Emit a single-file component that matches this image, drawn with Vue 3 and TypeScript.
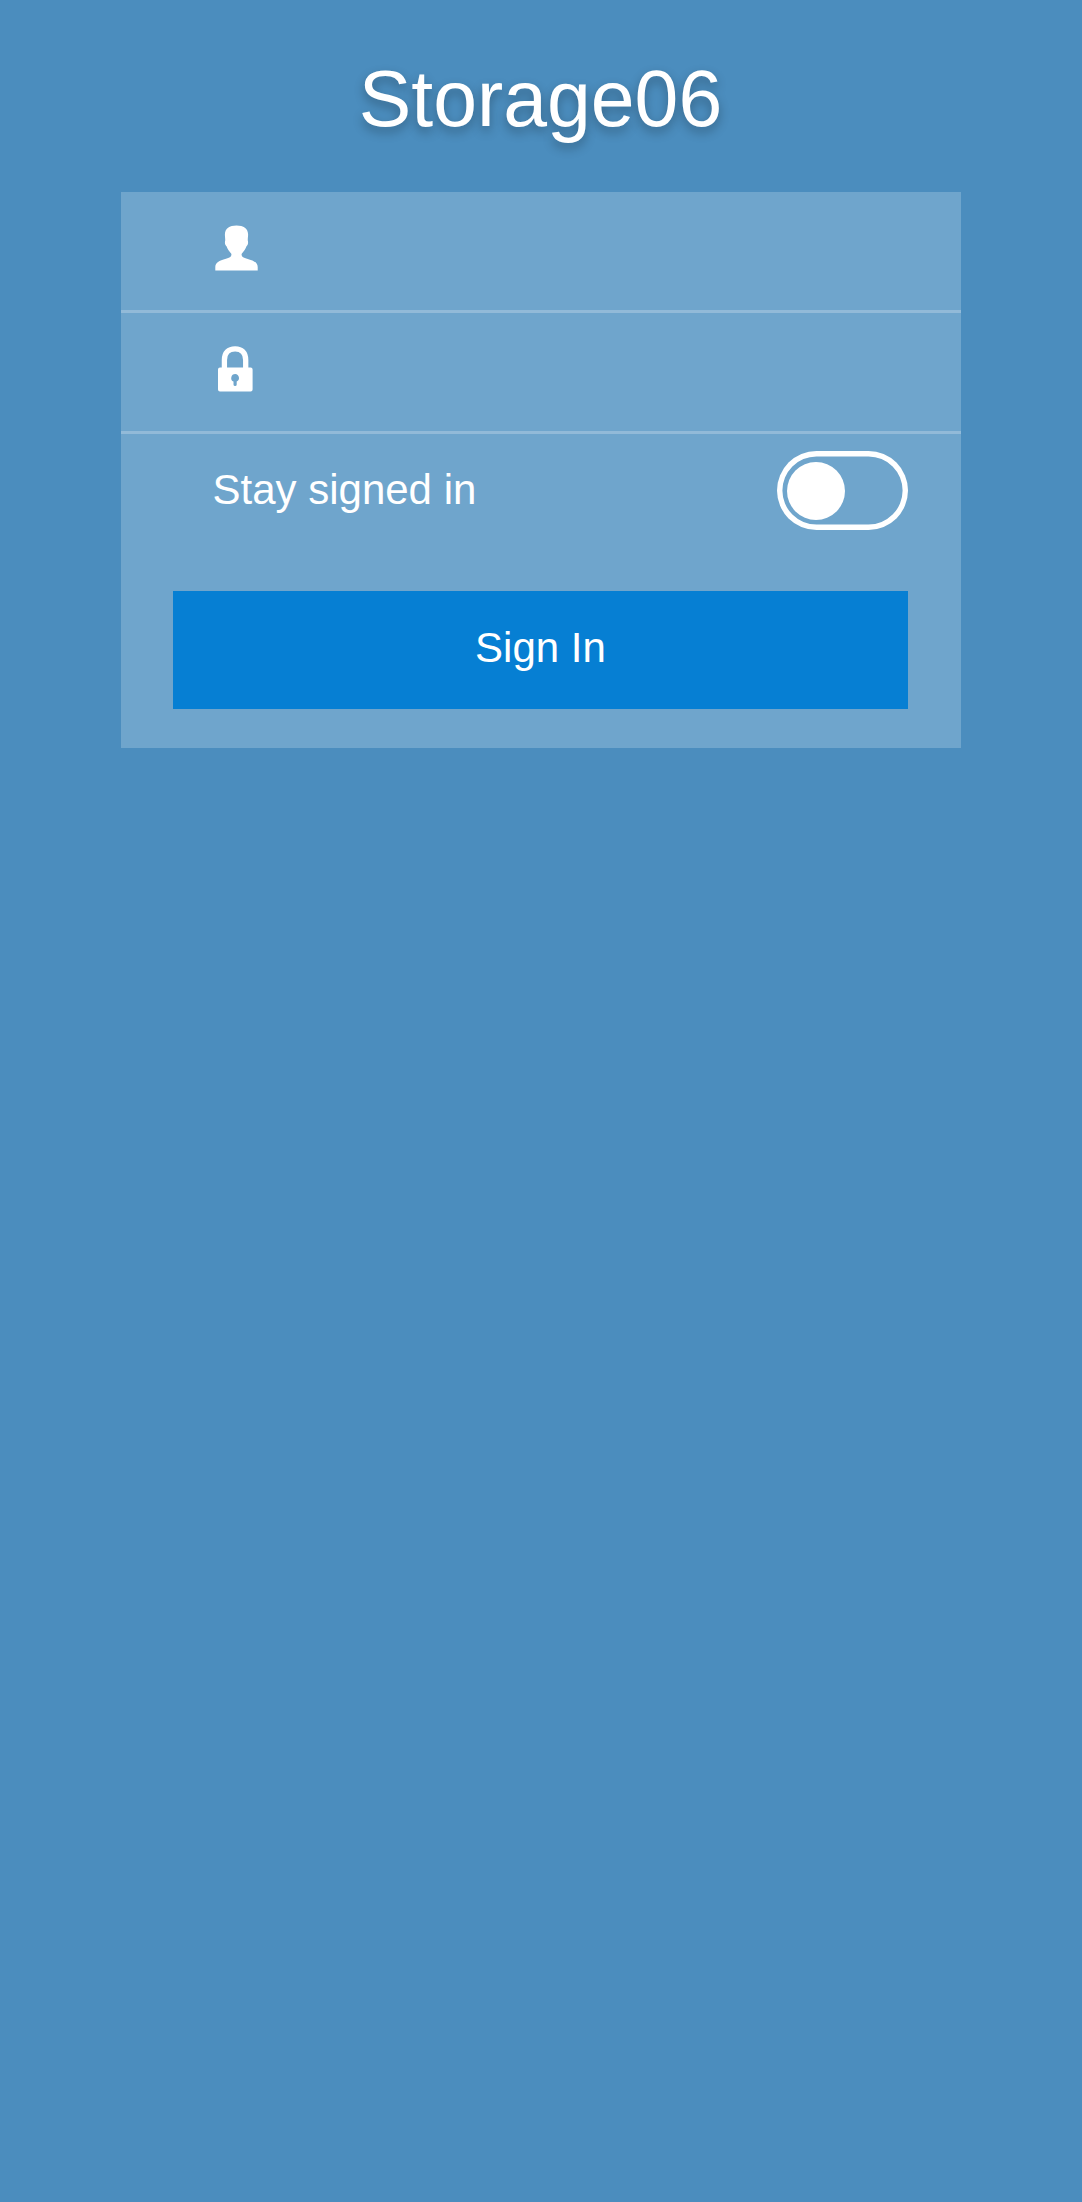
<script setup lang="ts">
import { ref } from 'vue'

const username = ref('')
const password = ref('')
const staySignedIn = ref(false)
</script>

<template>
  <main class="page">
    <h1 class="title">Storage06</h1>
    <form class="card" @submit.prevent>
      <label class="field">
        <svg class="icon" width="44" height="46" viewBox="0 0 44 46" fill="#fff" aria-hidden="true">
          <path d="M21.5 .4C14.5 .4 9.9 3.3 9.9 9.5C9.9 12 10.3 13.5 10.2 15.5C9.5 18 10.2 20.3 11.5 21.2C12.4 24.2 14.4 26.3 16.3 28.8C17 31.5 14.5 32.6 11 33.7C4 35.7 .3 37.6 .3 42V45.6H42.7V42C42.7 37.6 39 35.7 32 33.7C28.5 32.6 26 31.5 26.7 28.8C28.6 26.3 30.6 24.2 31.5 21.2C32.8 20.3 33.5 18 32.8 15.5C32.7 13.5 33.1 12 33.1 9.5C33.1 3.3 28.5 .4 21.5 .4Z" />
        </svg>
        <input v-model="username" type="text" aria-label="Username" />
      </label>
      <label class="field">
        <svg class="icon lock" width="36" height="46" viewBox="0 0 36 46" aria-hidden="true">
          <path d="M6.4 23V14C6.4 6.5 10.5 2.8 17.1 2.8S27.7 6.5 27.7 14V23" fill="none" stroke="#fff" stroke-width="5.3" />
          <path fill="#fff" fill-rule="evenodd" d="M2 21.4H32.6Q34.6 21.4 34.6 23.4V43.6Q34.6 45.6 32.6 45.6H2Q0 45.6 0 43.6V23.4Q0 21.4 2 21.4ZM17.2 28A4 4 0 0 0 15.5 35.6V38.6Q15.5 40.1 17.1 40.1T18.7 38.6V35.6A4 4 0 0 0 17.2 28Z" />
        </svg>
        <input v-model="password" type="password" aria-label="Password" />
      </label>
      <div class="stay">
        <span class="label">Stay signed in</span>
        <button class="switch" :class="{ on: staySignedIn }" type="button" role="switch" :aria-checked="staySignedIn" aria-label="Stay signed in" @click="staySignedIn = !staySignedIn">
          <span class="knob"></span>
        </button>
      </div>
      <button class="submit" type="submit">Sign In</button>
    </form>
  </main>
</template>

<style>
body {
  margin: 0;
  background: #4b8dbe;
}
</style>

<style scoped>
.page {
  box-sizing: border-box;
  min-height: 2202px;
  padding-top: 53px;
  background: #4b8dbe;
  color: #fff;
  font-family: "Liberation Sans", Arial, sans-serif;
}
.title {
  margin: 0;
  padding-right: 1px;
  height: 139px;
  line-height: 92px;
  text-align: center;
  font-size: 78.75px;
  font-weight: 400;
  text-shadow: 0 5.25px 10.5px rgba(0, 0, 0, 0.3);
}
.card {
  box-sizing: border-box;
  width: 840px;
  height: 556px;
  margin: 0 auto;
  background: #6fa5cc;
}
.field {
  box-sizing: border-box;
  display: flex;
  align-items: flex-start;
  height: 121px;
  padding: 33px 52px 0 94px;
  border-bottom: 3px solid #92bad8;
}
.icon {
  flex: none;
}
.lock {
  margin-left: 3px;
}
.field input {
  flex: 1;
  min-width: 0;
  height: 46px;
  margin-left: 24px;
  padding: 0;
  border: 0;
  outline: 0;
  background: transparent;
  color: inherit;
  font: 42px "Liberation Sans", Arial, sans-serif;
}
.stay {
  box-sizing: border-box;
  display: flex;
  align-items: center;
  justify-content: space-between;
  height: 114px;
  padding: 0 53px 1px 91.5px;
  font-size: 42px;
}
.label {
  padding-bottom: 2px;
}
.switch {
  box-sizing: border-box;
  display: flex;
  align-items: center;
  width: 131px;
  height: 79px;
  padding: 0 10.3px;
  border: 0;
  border-radius: 40px;
  background: transparent;
  box-shadow: inset 0 0 0 5.4px #fff;
}
.switch.on {
  justify-content: flex-end;
}
.knob {
  width: 58px;
  height: 58px;
  border-radius: 50%;
  background: #fff;
}
.submit {
  display: block;
  width: 735px;
  height: 118px;
  margin: 43px 0 0 52px;
  padding: 0 0 4px;
  border: 0;
  background: #067fd3;
  color: #fff;
  font: 42px "Liberation Sans", Arial, sans-serif;
}
</style>
